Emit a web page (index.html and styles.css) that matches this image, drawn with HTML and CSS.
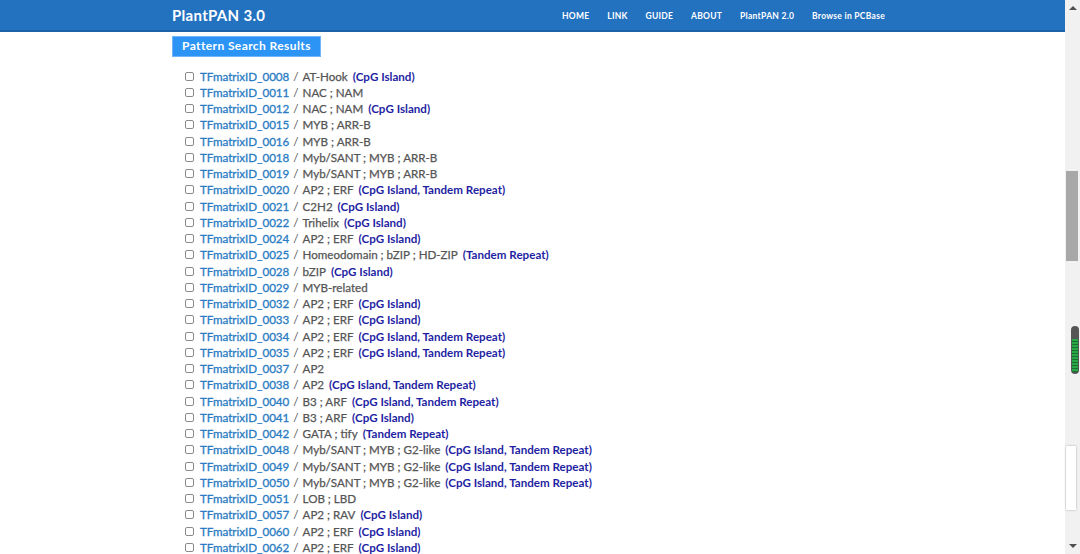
FILE: index.html
```html
<!DOCTYPE html>
<html>
<head>
<meta charset="utf-8">
<link rel="stylesheet" href="styles.css">
</head>
<body>
<div class="window">
  <div class="page">
    <header class="navbar">
      <div class="nav-inner">
        <span class="brand">PlantPAN 3.0</span>
        <nav class="menu">
          <span>HOME</span>
          <span>LINK</span>
          <span>GUIDE</span>
          <span>ABOUT</span>
          <span class="mixed">PlantPAN 2.0</span>
          <span class="mixed">Browse in PCBase</span>
        </nav>
      </div>
    </header>
    <main class="content">
      <div class="title-btn">Pattern Search Results</div>
      <ul class="results">
        <li><span class="cb"></span><a>TFmatrixID_0008</a><span class="sep">/</span><span class="fam">AT-Hook</span><b class="tag">(CpG Island)</b></li>
        <li><span class="cb"></span><a>TFmatrixID_0011</a><span class="sep">/</span><span class="fam">NAC ; NAM</span></li>
        <li><span class="cb"></span><a>TFmatrixID_0012</a><span class="sep">/</span><span class="fam">NAC ; NAM</span><b class="tag">(CpG Island)</b></li>
        <li><span class="cb"></span><a>TFmatrixID_0015</a><span class="sep">/</span><span class="fam">MYB ; ARR-B</span></li>
        <li><span class="cb"></span><a>TFmatrixID_0016</a><span class="sep">/</span><span class="fam">MYB ; ARR-B</span></li>
        <li><span class="cb"></span><a>TFmatrixID_0018</a><span class="sep">/</span><span class="fam">Myb/SANT ; MYB ; ARR-B</span></li>
        <li><span class="cb"></span><a>TFmatrixID_0019</a><span class="sep">/</span><span class="fam">Myb/SANT ; MYB ; ARR-B</span></li>
        <li><span class="cb"></span><a>TFmatrixID_0020</a><span class="sep">/</span><span class="fam">AP2 ; ERF</span><b class="tag">(CpG Island, Tandem Repeat)</b></li>
        <li><span class="cb"></span><a>TFmatrixID_0021</a><span class="sep">/</span><span class="fam">C2H2</span><b class="tag">(CpG Island)</b></li>
        <li><span class="cb"></span><a>TFmatrixID_0022</a><span class="sep">/</span><span class="fam">Trihelix</span><b class="tag">(CpG Island)</b></li>
        <li><span class="cb"></span><a>TFmatrixID_0024</a><span class="sep">/</span><span class="fam">AP2 ; ERF</span><b class="tag">(CpG Island)</b></li>
        <li><span class="cb"></span><a>TFmatrixID_0025</a><span class="sep">/</span><span class="fam">Homeodomain ; bZIP ; HD-ZIP</span><b class="tag">(Tandem Repeat)</b></li>
        <li><span class="cb"></span><a>TFmatrixID_0028</a><span class="sep">/</span><span class="fam">bZIP</span><b class="tag">(CpG Island)</b></li>
        <li><span class="cb"></span><a>TFmatrixID_0029</a><span class="sep">/</span><span class="fam">MYB-related</span></li>
        <li><span class="cb"></span><a>TFmatrixID_0032</a><span class="sep">/</span><span class="fam">AP2 ; ERF</span><b class="tag">(CpG Island)</b></li>
        <li><span class="cb"></span><a>TFmatrixID_0033</a><span class="sep">/</span><span class="fam">AP2 ; ERF</span><b class="tag">(CpG Island)</b></li>
        <li><span class="cb"></span><a>TFmatrixID_0034</a><span class="sep">/</span><span class="fam">AP2 ; ERF</span><b class="tag">(CpG Island, Tandem Repeat)</b></li>
        <li><span class="cb"></span><a>TFmatrixID_0035</a><span class="sep">/</span><span class="fam">AP2 ; ERF</span><b class="tag">(CpG Island, Tandem Repeat)</b></li>
        <li><span class="cb"></span><a>TFmatrixID_0037</a><span class="sep">/</span><span class="fam">AP2</span></li>
        <li><span class="cb"></span><a>TFmatrixID_0038</a><span class="sep">/</span><span class="fam">AP2</span><b class="tag">(CpG Island, Tandem Repeat)</b></li>
        <li><span class="cb"></span><a>TFmatrixID_0040</a><span class="sep">/</span><span class="fam">B3 ; ARF</span><b class="tag">(CpG Island, Tandem Repeat)</b></li>
        <li><span class="cb"></span><a>TFmatrixID_0041</a><span class="sep">/</span><span class="fam">B3 ; ARF</span><b class="tag">(CpG Island)</b></li>
        <li><span class="cb"></span><a>TFmatrixID_0042</a><span class="sep">/</span><span class="fam">GATA ; tify</span><b class="tag">(Tandem Repeat)</b></li>
        <li><span class="cb"></span><a>TFmatrixID_0048</a><span class="sep">/</span><span class="fam">Myb/SANT ; MYB ; G2-like</span><b class="tag">(CpG Island, Tandem Repeat)</b></li>
        <li><span class="cb"></span><a>TFmatrixID_0049</a><span class="sep">/</span><span class="fam">Myb/SANT ; MYB ; G2-like</span><b class="tag">(CpG Island, Tandem Repeat)</b></li>
        <li><span class="cb"></span><a>TFmatrixID_0050</a><span class="sep">/</span><span class="fam">Myb/SANT ; MYB ; G2-like</span><b class="tag">(CpG Island, Tandem Repeat)</b></li>
        <li><span class="cb"></span><a>TFmatrixID_0051</a><span class="sep">/</span><span class="fam">LOB ; LBD</span></li>
        <li><span class="cb"></span><a>TFmatrixID_0057</a><span class="sep">/</span><span class="fam">AP2 ; RAV</span><b class="tag">(CpG Island)</b></li>
        <li><span class="cb"></span><a>TFmatrixID_0060</a><span class="sep">/</span><span class="fam">AP2 ; ERF</span><b class="tag">(CpG Island)</b></li>
        <li><span class="cb"></span><a>TFmatrixID_0062</a><span class="sep">/</span><span class="fam">AP2 ; ERF</span><b class="tag">(CpG Island)</b></li>
      </ul>
    </main>
  </div>
  <aside class="scrollbar">
    <span class="arrow up"></span>
    <div class="track">
      <div class="thumb"></div>
    </div>
    <span class="arrow down"></span>
    <div class="widget"><div class="widget-fill"></div></div>
    <div class="popup"></div>
  </aside>
</div>
</body>
</html>
```

FILE: styles.css
```css
* { box-sizing: border-box; }
html, body { margin: 0; padding: 0; height: 100%; overflow: hidden; background: #fff; }
body { font-family: Lato, "Open Sans", sans-serif; }

.window { display: flex; width: 1080px; height: 554px; }
.page { flex: 1; height: 554px; overflow: hidden; }

.navbar {
  height: 32px;
  background: #2372bf;
  border-bottom: 2px solid #1d62a6;
}
.nav-inner {
  display: flex;
  align-items: center;
  height: 30px;
  padding-left: 172px;
}
.brand {
  color: #fff;
  font-weight: 700;
  font-size: 15px;
  letter-spacing: 0.3px;
  width: 390px;
}
.menu { display: flex; gap: 17.8px; margin-left: 0; }
.menu span {
  color: #fff;
  font-size: 8.5px;
  font-weight: 700;
  letter-spacing: 0.28px;
  padding-top: 1px;
}

.content { padding: 2px 0 0 172px; }
.title-btn {
  display: inline-block;
  background: #2b94f4;
  color: #fff;
  font-weight: 700;
  font-size: 12px;
  letter-spacing: 0.4px;
  padding: 2px 9px 3px 9px;
  line-height: 14px;
  border: 1px solid #6fb5f7;
}
.results {
  list-style: none;
  margin: 11px 0 0 0;
  padding: 0 0 0 13px;
}
.results li {
  display: flex;
  align-items: center;
  height: 16.25px;
  font-size: 11.6px;
  white-space: nowrap;
}
.cb {
  width: 9px;
  height: 9px;
  border: 1px solid #8a8a8a;
  border-radius: 2px;
  margin-right: 6px;
  flex: none;
}
.results a {
  color: #2a7bc3;
  font-weight: 400;
  -webkit-text-stroke: 0.3px #2a7bc3;
}
.sep { color: #555; margin: 0 4px; }
.fam { color: #555; font-weight: 400; -webkit-text-stroke: 0.25px #555; }
.tag {
  color: #1f1fa3;
  font-weight: 700;
  margin-left: 5px;
}

.scrollbar {
  position: relative;
  width: 15px;
  height: 554px;
  background: #f1f1f1;
  display: flex;
  flex-direction: column;
  align-items: center;
}
.arrow { width: 0; height: 0; border-left: 4px solid transparent; border-right: 4px solid transparent; flex: none; }
.arrow.up { border-bottom: 4px solid #505050; margin-top: 6px; }
.arrow.down { border-top: 4px solid #505050; margin-bottom: 6px; }
.track { flex: 1; width: 100%; padding-top: 161px; }
.thumb { margin-left: 1px; width: 12px; height: 90px; background: #a8a8a8; }

.widget {
  position: absolute;
  left: 6px;
  top: 326px;
  width: 8px;
  height: 48px;
  border-radius: 4px;
  background: #555;
  overflow: hidden;
}
.widget-fill {
  position: absolute;
  left: 1px; right: 1px; top: 13px; bottom: 2px;
  background: repeating-linear-gradient(#27a745 0 2px, #1b6e30 2px 3px);
}
.popup {
  position: absolute;
  left: 1px;
  top: 446px;
  width: 10px;
  height: 64px;
  background: #fff;
  box-shadow: 0 0 2px rgba(0,0,0,0.3);
}
```
